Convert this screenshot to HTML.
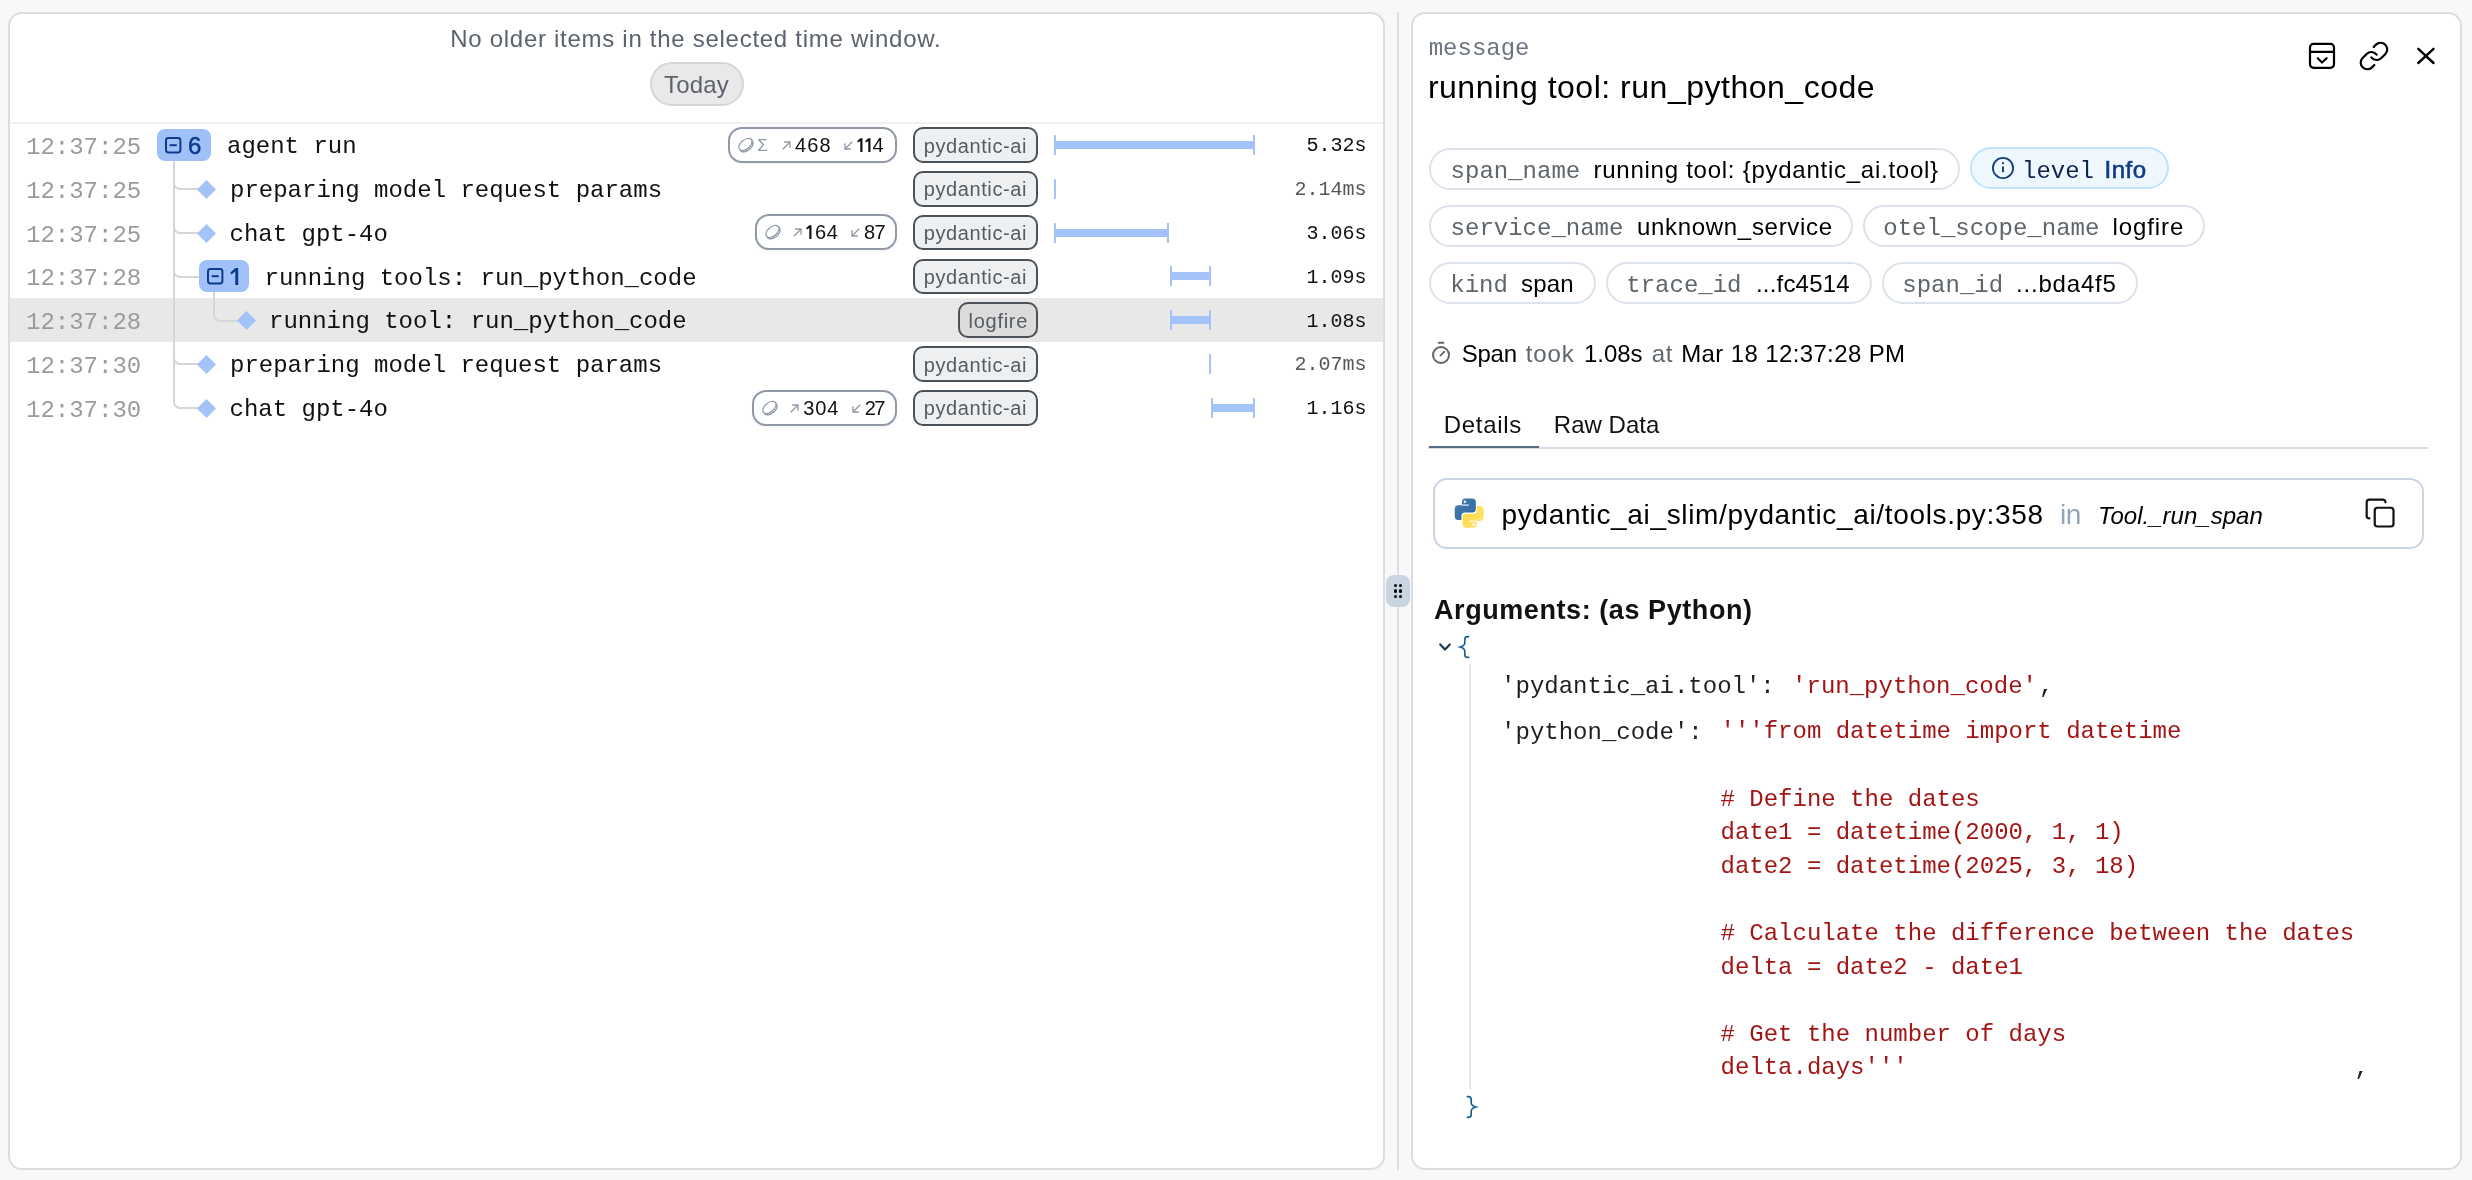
<!DOCTYPE html>
<html><head><meta charset="utf-8"><style>
html,body{margin:0;padding:0;width:2472px;height:1180px;overflow:hidden;background:#f8f8f8;}
.r{position:absolute;}
.t{position:absolute;white-space:pre;}
#w{position:absolute;left:0;top:0;width:2472px;height:1180px;will-change:transform;}
</style></head><body><div id="w">
<div class="r" style="left:8px;top:12px;width:1377px;height:1158px;background:#fff;border:2px solid #dcdde2;border-radius:14px;box-sizing:border-box;"></div>
<div class="r" style="left:1411px;top:12px;width:1051px;height:1158px;background:#fff;border:2px solid #dcdde2;border-radius:14px;box-sizing:border-box;"></div>
<div class="r" style="left:1397px;top:12px;width:2px;height:1158px;background:#dcdde2;"></div>
<div class="r" style="left:1386px;top:575px;width:24px;height:32px;background:#cad5e2;border-radius:8px;"></div>
<div class="r" style="left:1393.9px;top:583.9px;width:3.2px;height:3.2px;border-radius:50%;background:#000"></div>
<div class="r" style="left:1393.9px;top:589.4px;width:3.2px;height:3.2px;border-radius:50%;background:#000"></div>
<div class="r" style="left:1393.9px;top:594.9px;width:3.2px;height:3.2px;border-radius:50%;background:#000"></div>
<div class="r" style="left:1398.9px;top:583.9px;width:3.2px;height:3.2px;border-radius:50%;background:#000"></div>
<div class="r" style="left:1398.9px;top:589.4px;width:3.2px;height:3.2px;border-radius:50%;background:#000"></div>
<div class="r" style="left:1398.9px;top:594.9px;width:3.2px;height:3.2px;border-radius:50%;background:#000"></div>
<div class="t" style="left:450.20px;top:26.70px;font-family:'Liberation Sans', sans-serif;font-weight:400;font-style:normal;font-size:24px;line-height:24px;color:#5c636d;letter-spacing:0.719px;">No older items in the selected time window.</div>
<div class="r" style="left:650px;top:62px;width:94px;height:44px;background:#e9e9ea;border:2px solid #d5d6db;border-radius:22px;box-sizing:border-box;"></div>
<div class="t" style="left:664.00px;top:73.30px;font-family:'Liberation Sans', sans-serif;font-weight:400;font-style:normal;font-size:24px;line-height:24px;color:#5c636d;letter-spacing:0.175px;">Today</div>
<div class="r" style="left:10px;top:122px;width:1373px;height:2px;background:#eff0f1;"></div>
<div class="r" style="left:10px;top:298px;width:1373px;height:44px;background:#e8e8e8;"></div>
<div class="t" style="left:26.00px;top:136.00px;font-family:'Liberation Mono', monospace;font-weight:400;font-style:normal;font-size:24px;line-height:24px;color:#9b9b9b;">12:37:25</div>
<div class="t" style="left:26.00px;top:179.80px;font-family:'Liberation Mono', monospace;font-weight:400;font-style:normal;font-size:24px;line-height:24px;color:#9b9b9b;">12:37:25</div>
<div class="t" style="left:26.00px;top:223.60px;font-family:'Liberation Mono', monospace;font-weight:400;font-style:normal;font-size:24px;line-height:24px;color:#9b9b9b;">12:37:25</div>
<div class="t" style="left:26.00px;top:267.40px;font-family:'Liberation Mono', monospace;font-weight:400;font-style:normal;font-size:24px;line-height:24px;color:#9b9b9b;">12:37:28</div>
<div class="t" style="left:26.00px;top:311.20px;font-family:'Liberation Mono', monospace;font-weight:400;font-style:normal;font-size:24px;line-height:24px;color:#9b9b9b;">12:37:28</div>
<div class="t" style="left:26.00px;top:355.00px;font-family:'Liberation Mono', monospace;font-weight:400;font-style:normal;font-size:24px;line-height:24px;color:#9b9b9b;">12:37:30</div>
<div class="t" style="left:26.00px;top:398.80px;font-family:'Liberation Mono', monospace;font-weight:400;font-style:normal;font-size:24px;line-height:24px;color:#9b9b9b;">12:37:30</div>
<div class="r" style="left:173px;top:161px;width:27px;height:29px;border-left:2px solid #d5d6db;border-bottom:2px solid #d5d6db;border-bottom-left-radius:7px;box-sizing:border-box;"></div>
<div class="r" style="left:173px;top:161px;width:27px;height:73px;border-left:2px solid #d5d6db;border-bottom:2px solid #d5d6db;border-bottom-left-radius:7px;box-sizing:border-box;"></div>
<div class="r" style="left:173px;top:161px;width:27px;height:117px;border-left:2px solid #d5d6db;border-bottom:2px solid #d5d6db;border-bottom-left-radius:7px;box-sizing:border-box;"></div>
<div class="r" style="left:173px;top:161px;width:27px;height:204px;border-left:2px solid #d5d6db;border-bottom:2px solid #d5d6db;border-bottom-left-radius:7px;box-sizing:border-box;"></div>
<div class="r" style="left:173px;top:161px;width:27px;height:248px;border-left:2px solid #d5d6db;border-bottom:2px solid #d5d6db;border-bottom-left-radius:7px;box-sizing:border-box;"></div>
<div class="r" style="left:213px;top:292px;width:27px;height:30px;border-left:2px solid #d5d6db;border-bottom:2px solid #d5d6db;border-bottom-left-radius:7px;box-sizing:border-box;"></div>
<div class="r" style="left:157px;top:129px;width:54px;height:32px;background:#a0c1f8;border-radius:8px;"></div>
<svg class="r" style="left:164.6px;top:136.8px;" width="17" height="17" viewBox="0 0 17 17"><rect x="1" y="1" width="14.4" height="14.4" rx="2.4" fill="none" stroke="#0c3b8c" stroke-width="2"/><line x1="4.6" y1="8.2" x2="11.8" y2="8.2" stroke="#0c3b8c" stroke-width="2"/></svg>
<div class="t" style="left:188.00px;top:134.00px;font-family:'Liberation Sans', sans-serif;font-weight:400;font-style:normal;font-size:24px;line-height:24px;color:#0c3b8c;-webkit-text-stroke:0.5px #0c3b8c;">6</div>
<div class="r" style="left:199px;top:260px;width:50px;height:32px;background:#a0c1f8;border-radius:8px;"></div>
<svg class="r" style="left:206.6px;top:267.8px;" width="17" height="17" viewBox="0 0 17 17"><rect x="1" y="1" width="14.4" height="14.4" rx="2.4" fill="none" stroke="#0c3b8c" stroke-width="2"/><line x1="4.6" y1="8.2" x2="11.8" y2="8.2" stroke="#0c3b8c" stroke-width="2"/></svg>
<svg class="r" style="left:227px;top:266px;" width="14" height="22" viewBox="0 0 14 22"><path d="M8.3 1.9 H11.2 V18.9 H8.3 V5.5 L4.3 8.4 L3.4 6.5 Z" fill="#0c3b8c"/></svg>
<svg class="r" style="left:196.5px;top:179.8px;" width="19" height="19" viewBox="0 0 19 19"><polygon points="9.5,0 19,9.5 9.5,19 0,9.5" fill="#a3c2f7"/></svg>
<svg class="r" style="left:196.5px;top:223.6px;" width="19" height="19" viewBox="0 0 19 19"><polygon points="9.5,0 19,9.5 9.5,19 0,9.5" fill="#a3c2f7"/></svg>
<svg class="r" style="left:236.5px;top:311.2px;" width="19" height="19" viewBox="0 0 19 19"><polygon points="9.5,0 19,9.5 9.5,19 0,9.5" fill="#a3c2f7"/></svg>
<svg class="r" style="left:196.5px;top:355.0px;" width="19" height="19" viewBox="0 0 19 19"><polygon points="9.5,0 19,9.5 9.5,19 0,9.5" fill="#a3c2f7"/></svg>
<svg class="r" style="left:196.5px;top:398.79999999999995px;" width="19" height="19" viewBox="0 0 19 19"><polygon points="9.5,0 19,9.5 9.5,19 0,9.5" fill="#a3c2f7"/></svg>
<div class="t" style="left:227.00px;top:135.20px;font-family:'Liberation Mono', monospace;font-weight:400;font-style:normal;font-size:24px;line-height:24px;color:#111;">agent run</div>
<div class="t" style="left:230.00px;top:179.00px;font-family:'Liberation Mono', monospace;font-weight:400;font-style:normal;font-size:24px;line-height:24px;color:#111;">preparing model request params</div>
<div class="t" style="left:229.50px;top:222.80px;font-family:'Liberation Mono', monospace;font-weight:400;font-style:normal;font-size:24px;line-height:24px;color:#111;">chat gpt-4o</div>
<div class="t" style="left:264.50px;top:266.60px;font-family:'Liberation Mono', monospace;font-weight:400;font-style:normal;font-size:24px;line-height:24px;color:#111;">running tools: run_python_code</div>
<div class="t" style="left:269.00px;top:310.40px;font-family:'Liberation Mono', monospace;font-weight:400;font-style:normal;font-size:24px;line-height:24px;color:#111;">running tool: run_python_code</div>
<div class="t" style="left:230.00px;top:354.20px;font-family:'Liberation Mono', monospace;font-weight:400;font-style:normal;font-size:24px;line-height:24px;color:#111;">preparing model request params</div>
<div class="t" style="left:229.50px;top:398.00px;font-family:'Liberation Mono', monospace;font-weight:400;font-style:normal;font-size:24px;line-height:24px;color:#111;">chat gpt-4o</div>
<div class="r" style="left:728px;top:127px;width:169px;height:36px;background:#fff;border:2px solid #8f99a8;border-radius:14px;box-sizing:border-box;box-shadow:0 1px 2px rgba(0,0,0,0.05);"></div>
<svg class="r" style="left:736.5px;top:135.5px;" width="18" height="18" viewBox="0 0 18 18"><g fill="none" stroke="#8e98a8" stroke-width="1.1" transform="translate(0.6 0.8) scale(1.06) rotate(-40 8 8)"><ellipse cx="8" cy="7" rx="7.3" ry="4.3"/><path d="M0.7 7 V8.8 A7.3 4.3 0 0 0 15.3 8.8 V7"/><line x1="2.50" y1="9.83" x2="2.50" y2="11.63"/><line x1="5.20" y1="10.97" x2="5.20" y2="12.77"/><line x1="8.00" y1="11.30" x2="8.00" y2="13.10"/><line x1="10.80" y1="10.97" x2="10.80" y2="12.77"/><line x1="13.50" y1="9.83" x2="13.50" y2="11.63"/></g></svg>
<div class="t" style="left:757.30px;top:136.80px;font-family:'Liberation Sans', sans-serif;font-weight:400;font-style:normal;font-size:17px;line-height:17px;color:#8e98a8;">Σ</div>
<svg class="r" style="left:782px;top:141.2px;" width="9" height="9" viewBox="0 0 9 9"><g fill="none" stroke="#8e98a8" stroke-width="1.3"><path d="M0.8 8.2 L7.8 1.2"/><path d="M2.2 1 H8 V6.8"/></g></svg>
<div class="t" style="left:795.00px;top:135.00px;font-family:'Liberation Sans', sans-serif;font-weight:400;font-style:normal;font-size:20px;line-height:20px;color:#111;letter-spacing:1.150px;">468</div>
<svg class="r" style="left:844.2px;top:141.4px;" width="9" height="9" viewBox="0 0 9 9"><g fill="none" stroke="#8e98a8" stroke-width="1.3"><path d="M8.2 0.8 L1.2 7.8"/><path d="M1 2.2 V8 H6.8"/></g></svg>
<svg class="r" style="left:856.5px;top:138.1px;" width="6" height="14.2" viewBox="0 0 6 14.2"><path d="M3.3 0.2 H5.5 V13.9 H3.3 V3.0 L1.0 4.5 L0.2 2.9 Z" fill="#111"/></svg>
<svg class="r" style="left:865.4000000000001px;top:138.1px;" width="6" height="14.2" viewBox="0 0 6 14.2"><path d="M3.3 0.2 H5.5 V13.9 H3.3 V3.0 L1.0 4.5 L0.2 2.9 Z" fill="#111"/></svg>
<div class="t" style="left:872.60px;top:135.00px;font-family:'Liberation Sans', sans-serif;font-weight:400;font-style:normal;font-size:20px;line-height:20px;color:#111;">4</div>
<div class="r" style="left:755px;top:214px;width:142px;height:36px;background:#fff;border:2px solid #8f99a8;border-radius:14px;box-sizing:border-box;box-shadow:0 1px 2px rgba(0,0,0,0.05);"></div>
<svg class="r" style="left:763.7px;top:222.5px;" width="18" height="18" viewBox="0 0 18 18"><g fill="none" stroke="#8e98a8" stroke-width="1.1" transform="translate(0.6 0.8) scale(1.06) rotate(-40 8 8)"><ellipse cx="8" cy="7" rx="7.3" ry="4.3"/><path d="M0.7 7 V8.8 A7.3 4.3 0 0 0 15.3 8.8 V7"/><line x1="2.50" y1="9.83" x2="2.50" y2="11.63"/><line x1="5.20" y1="10.97" x2="5.20" y2="12.77"/><line x1="8.00" y1="11.30" x2="8.00" y2="13.10"/><line x1="10.80" y1="10.97" x2="10.80" y2="12.77"/><line x1="13.50" y1="9.83" x2="13.50" y2="11.63"/></g></svg>
<svg class="r" style="left:792.8px;top:228.2px;" width="9" height="9" viewBox="0 0 9 9"><g fill="none" stroke="#8e98a8" stroke-width="1.3"><path d="M0.8 8.2 L7.8 1.2"/><path d="M2.2 1 H8 V6.8"/></g></svg>
<svg class="r" style="left:805.5px;top:225.1px;" width="6" height="14.2" viewBox="0 0 6 14.2"><path d="M3.3 0.2 H5.5 V13.9 H3.3 V3.0 L1.0 4.5 L0.2 2.9 Z" fill="#111"/></svg>
<div class="t" style="left:815.00px;top:222.00px;font-family:'Liberation Sans', sans-serif;font-weight:400;font-style:normal;font-size:20px;line-height:20px;color:#111;letter-spacing:0.700px;">64</div>
<svg class="r" style="left:851.2px;top:228.4px;" width="9" height="9" viewBox="0 0 9 9"><g fill="none" stroke="#8e98a8" stroke-width="1.3"><path d="M8.2 0.8 L1.2 7.8"/><path d="M1 2.2 V8 H6.8"/></g></svg>
<div class="t" style="left:864.00px;top:222.00px;font-family:'Liberation Sans', sans-serif;font-weight:400;font-style:normal;font-size:20px;line-height:20px;color:#111;letter-spacing:-0.700px;">87</div>
<div class="r" style="left:752px;top:390px;width:145px;height:36px;background:#fff;border:2px solid #8f99a8;border-radius:14px;box-sizing:border-box;box-shadow:0 1px 2px rgba(0,0,0,0.05);"></div>
<svg class="r" style="left:760.7px;top:398.5px;" width="18" height="18" viewBox="0 0 18 18"><g fill="none" stroke="#8e98a8" stroke-width="1.1" transform="translate(0.6 0.8) scale(1.06) rotate(-40 8 8)"><ellipse cx="8" cy="7" rx="7.3" ry="4.3"/><path d="M0.7 7 V8.8 A7.3 4.3 0 0 0 15.3 8.8 V7"/><line x1="2.50" y1="9.83" x2="2.50" y2="11.63"/><line x1="5.20" y1="10.97" x2="5.20" y2="12.77"/><line x1="8.00" y1="11.30" x2="8.00" y2="13.10"/><line x1="10.80" y1="10.97" x2="10.80" y2="12.77"/><line x1="13.50" y1="9.83" x2="13.50" y2="11.63"/></g></svg>
<svg class="r" style="left:789.8px;top:404.2px;" width="9" height="9" viewBox="0 0 9 9"><g fill="none" stroke="#8e98a8" stroke-width="1.3"><path d="M0.8 8.2 L7.8 1.2"/><path d="M2.2 1 H8 V6.8"/></g></svg>
<div class="t" style="left:803.30px;top:398.00px;font-family:'Liberation Sans', sans-serif;font-weight:400;font-style:normal;font-size:20px;line-height:20px;color:#111;letter-spacing:0.900px;">304</div>
<svg class="r" style="left:852.4px;top:404.4px;" width="9" height="9" viewBox="0 0 9 9"><g fill="none" stroke="#8e98a8" stroke-width="1.3"><path d="M8.2 0.8 L1.2 7.8"/><path d="M1 2.2 V8 H6.8"/></g></svg>
<div class="t" style="left:864.70px;top:398.00px;font-family:'Liberation Sans', sans-serif;font-weight:400;font-style:normal;font-size:20px;line-height:20px;color:#111;letter-spacing:-1.600px;">27</div>
<div class="r" style="left:913px;top:127.2px;width:125px;height:35.60000000000001px;background:#eeeff1;border:2px solid #4b5158;border-radius:10px;box-sizing:border-box;"></div>
<div class="t" style="left:923.70px;top:135.50px;font-family:'Liberation Sans', sans-serif;font-weight:400;font-style:normal;font-size:20px;line-height:20px;color:#555b63;letter-spacing:0.600px;">pydantic-ai</div>
<div class="r" style="left:913px;top:171.0px;width:125px;height:35.60000000000002px;background:#eeeff1;border:2px solid #4b5158;border-radius:10px;box-sizing:border-box;"></div>
<div class="t" style="left:923.70px;top:179.30px;font-family:'Liberation Sans', sans-serif;font-weight:400;font-style:normal;font-size:20px;line-height:20px;color:#555b63;letter-spacing:0.600px;">pydantic-ai</div>
<div class="r" style="left:913px;top:214.79999999999998px;width:125px;height:35.60000000000002px;background:#eeeff1;border:2px solid #4b5158;border-radius:10px;box-sizing:border-box;"></div>
<div class="t" style="left:923.70px;top:223.10px;font-family:'Liberation Sans', sans-serif;font-weight:400;font-style:normal;font-size:20px;line-height:20px;color:#555b63;letter-spacing:0.600px;">pydantic-ai</div>
<div class="r" style="left:913px;top:258.59999999999997px;width:125px;height:35.60000000000002px;background:#eeeff1;border:2px solid #4b5158;border-radius:10px;box-sizing:border-box;"></div>
<div class="t" style="left:923.70px;top:266.90px;font-family:'Liberation Sans', sans-serif;font-weight:400;font-style:normal;font-size:20px;line-height:20px;color:#555b63;letter-spacing:0.600px;">pydantic-ai</div>
<div class="r" style="left:958px;top:302.4px;width:80px;height:35.60000000000002px;background:#dcdcdd;border:2px solid #4b5158;border-radius:10px;box-sizing:border-box;"></div>
<div class="t" style="left:968.60px;top:310.70px;font-family:'Liberation Sans', sans-serif;font-weight:400;font-style:normal;font-size:20px;line-height:20px;color:#555b63;letter-spacing:0.700px;">logfire</div>
<div class="r" style="left:913px;top:346.2px;width:125px;height:35.60000000000002px;background:#eeeff1;border:2px solid #4b5158;border-radius:10px;box-sizing:border-box;"></div>
<div class="t" style="left:923.70px;top:354.50px;font-family:'Liberation Sans', sans-serif;font-weight:400;font-style:normal;font-size:20px;line-height:20px;color:#555b63;letter-spacing:0.600px;">pydantic-ai</div>
<div class="r" style="left:913px;top:389.99999999999994px;width:125px;height:35.60000000000002px;background:#eeeff1;border:2px solid #4b5158;border-radius:10px;box-sizing:border-box;"></div>
<div class="t" style="left:923.70px;top:398.30px;font-family:'Liberation Sans', sans-serif;font-weight:400;font-style:normal;font-size:20px;line-height:20px;color:#555b63;letter-spacing:0.600px;">pydantic-ai</div>
<div class="r" style="left:1054px;top:135.0px;width:2px;height:20.0px;background:#a3c2f7;"></div>
<div class="r" style="left:1054px;top:141.0px;width:201px;height:8.0px;background:#a3c2f7;"></div>
<div class="r" style="left:1253px;top:135.0px;width:2px;height:20.0px;background:#a3c2f7;"></div>
<div class="r" style="left:1054px;top:178.8px;width:2px;height:20.0px;background:#a3c2f7;"></div>
<div class="r" style="left:1054px;top:222.6px;width:2px;height:20.0px;background:#a3c2f7;"></div>
<div class="r" style="left:1054px;top:228.6px;width:115px;height:8.0px;background:#a3c2f7;"></div>
<div class="r" style="left:1167px;top:222.6px;width:2px;height:20.0px;background:#a3c2f7;"></div>
<div class="r" style="left:1170px;top:266.4px;width:2px;height:20.0px;background:#a3c2f7;"></div>
<div class="r" style="left:1170px;top:272.4px;width:41px;height:8.0px;background:#a3c2f7;"></div>
<div class="r" style="left:1209px;top:266.4px;width:2px;height:20.0px;background:#a3c2f7;"></div>
<div class="r" style="left:1170px;top:310.2px;width:2px;height:20.0px;background:#a3c2f7;"></div>
<div class="r" style="left:1170px;top:316.2px;width:41px;height:8.0px;background:#a3c2f7;"></div>
<div class="r" style="left:1209px;top:310.2px;width:2px;height:20.0px;background:#a3c2f7;"></div>
<div class="r" style="left:1209px;top:354.0px;width:2px;height:20.0px;background:#a3c2f7;"></div>
<div class="r" style="left:1211px;top:397.79999999999995px;width:2px;height:20.0px;background:#a3c2f7;"></div>
<div class="r" style="left:1211px;top:403.79999999999995px;width:44px;height:8.0px;background:#a3c2f7;"></div>
<div class="r" style="left:1253px;top:397.79999999999995px;width:2px;height:20.0px;background:#a3c2f7;"></div>
<div class="t" style="left:1306.60px;top:136.40px;font-family:'Liberation Mono', monospace;font-weight:400;font-style:normal;font-size:20px;line-height:20px;color:#111;">5.32s</div>
<div class="t" style="left:1294.60px;top:180.20px;font-family:'Liberation Mono', monospace;font-weight:400;font-style:normal;font-size:20px;line-height:20px;color:#555;">2.14ms</div>
<div class="t" style="left:1306.60px;top:224.00px;font-family:'Liberation Mono', monospace;font-weight:400;font-style:normal;font-size:20px;line-height:20px;color:#111;">3.06s</div>
<div class="t" style="left:1306.60px;top:267.80px;font-family:'Liberation Mono', monospace;font-weight:400;font-style:normal;font-size:20px;line-height:20px;color:#111;">1.09s</div>
<div class="t" style="left:1306.60px;top:311.60px;font-family:'Liberation Mono', monospace;font-weight:400;font-style:normal;font-size:20px;line-height:20px;color:#111;">1.08s</div>
<div class="t" style="left:1294.60px;top:355.40px;font-family:'Liberation Mono', monospace;font-weight:400;font-style:normal;font-size:20px;line-height:20px;color:#555;">2.07ms</div>
<div class="t" style="left:1306.60px;top:399.20px;font-family:'Liberation Mono', monospace;font-weight:400;font-style:normal;font-size:20px;line-height:20px;color:#111;">1.16s</div>
<div class="t" style="left:1428.70px;top:36.80px;font-family:'Liberation Mono', monospace;font-weight:400;font-style:normal;font-size:24px;line-height:24px;color:#6b7280;">message</div>
<div class="t" style="left:1427.90px;top:70.60px;font-family:'Liberation Sans', sans-serif;font-weight:400;font-style:normal;font-size:32px;line-height:32px;color:#000;letter-spacing:0.514px;">running tool: run_python_code</div>
<svg class="r" style="left:2306px;top:40px;" width="32" height="32" viewBox="0 0 32 32"><g fill="none" stroke="#000" stroke-width="2.2" stroke-linecap="round" stroke-linejoin="round"><rect x="4" y="3.9" width="24" height="23.9" rx="3.5"/><line x1="4" y1="11.9" x2="28" y2="11.9"/><polyline points="11.8,18.2 16,22.5 20.6,18.2"/></g></svg>
<svg class="r" style="left:2357.8px;top:39.9px;" width="32" height="32" viewBox="0 0 24 24"><g fill="none" stroke="#000" stroke-width="1.65" stroke-linecap="round" stroke-linejoin="round"><path d="M10 13a5 5 0 0 0 7.54.54l3-3a5 5 0 0 0-7.07-7.07l-1.72 1.71"/><path d="M14 11a5 5 0 0 0-7.54-.54l-3 3a5 5 0 0 0 7.07 7.07l1.71-1.71"/></g></svg>
<svg class="r" style="left:2410px;top:40px;" width="32" height="32" viewBox="0 0 32 32"><g fill="none" stroke="#000" stroke-width="2.4" stroke-linecap="round"><line x1="8.3" y1="8.8" x2="23.5" y2="23"/><line x1="23.5" y1="8.8" x2="8.3" y2="23"/></g></svg>
<div class="r" style="left:1429px;top:148px;width:531px;height:42px;background:#fff;border:2px solid #dbe2ec;border-radius:22px;box-sizing:border-box;"></div>
<div class="t" style="left:1450.60px;top:159.80px;font-family:'Liberation Mono', monospace;font-weight:400;font-style:normal;font-size:24px;line-height:24px;color:#5f656d;">span_name</div>
<div class="t" style="left:1593.50px;top:157.80px;font-family:'Liberation Sans', sans-serif;font-weight:400;font-style:normal;font-size:24px;line-height:24px;color:#000;letter-spacing:0.742px;">running tool: {pydantic_ai.tool}</div>
<div class="r" style="left:1970px;top:147px;width:199px;height:42px;background:#eff7fe;border:2px solid #bfe3fb;border-radius:22px;box-sizing:border-box;"></div>
<svg class="r" style="left:1990.8px;top:156px;" width="24" height="24" viewBox="0 0 24 24"><circle cx="12" cy="12" r="10.1" fill="none" stroke="#163d7a" stroke-width="1.8"/><line x1="12" y1="10.5" x2="12" y2="16.3" stroke="#163d7a" stroke-width="1.9"/><circle cx="12" cy="7.2" r="1.1" fill="#163d7a"/></svg>
<div class="t" style="left:2022.00px;top:159.50px;font-family:'Liberation Mono', monospace;font-weight:400;font-style:normal;font-size:24px;line-height:24px;color:#0f2350;">level</div>
<div class="t" style="left:2104.60px;top:157.50px;font-family:'Liberation Sans', sans-serif;font-weight:400;font-style:normal;font-size:24px;line-height:24px;color:#0f3a85;letter-spacing:0.467px;-webkit-text-stroke:0.6px #0f3a85;">Info</div>
<div class="r" style="left:1429px;top:205px;width:424px;height:42px;background:#fff;border:2px solid #dbe2ec;border-radius:22px;box-sizing:border-box;"></div>
<div class="t" style="left:1450.60px;top:216.80px;font-family:'Liberation Mono', monospace;font-weight:400;font-style:normal;font-size:24px;line-height:24px;color:#5f656d;">service_name</div>
<div class="t" style="left:1637.00px;top:214.80px;font-family:'Liberation Sans', sans-serif;font-weight:400;font-style:normal;font-size:24px;line-height:24px;color:#000;letter-spacing:0.686px;">unknown_service</div>
<div class="r" style="left:1863px;top:205px;width:342px;height:42px;background:#fff;border:2px solid #dbe2ec;border-radius:22px;box-sizing:border-box;"></div>
<div class="t" style="left:1883.30px;top:216.80px;font-family:'Liberation Mono', monospace;font-weight:400;font-style:normal;font-size:24px;line-height:24px;color:#5f656d;">otel_scope_name</div>
<div class="t" style="left:2112.40px;top:214.80px;font-family:'Liberation Sans', sans-serif;font-weight:400;font-style:normal;font-size:24px;line-height:24px;color:#000;letter-spacing:0.933px;">logfire</div>
<div class="r" style="left:1429px;top:262px;width:167px;height:42px;background:#fff;border:2px solid #dbe2ec;border-radius:22px;box-sizing:border-box;"></div>
<div class="t" style="left:1450.30px;top:273.80px;font-family:'Liberation Mono', monospace;font-weight:400;font-style:normal;font-size:24px;line-height:24px;color:#5f656d;">kind</div>
<div class="t" style="left:1521.00px;top:271.80px;font-family:'Liberation Sans', sans-serif;font-weight:400;font-style:normal;font-size:24px;line-height:24px;color:#000;letter-spacing:0.167px;">span</div>
<div class="r" style="left:1606px;top:262px;width:266px;height:42px;background:#fff;border:2px solid #dbe2ec;border-radius:22px;box-sizing:border-box;"></div>
<div class="t" style="left:1626.30px;top:273.80px;font-family:'Liberation Mono', monospace;font-weight:400;font-style:normal;font-size:24px;line-height:24px;color:#5f656d;">trace_id</div>
<div class="t" style="left:1756.00px;top:271.80px;font-family:'Liberation Sans', sans-serif;font-weight:400;font-style:normal;font-size:24px;line-height:24px;color:#000;letter-spacing:0.188px;">...fc4514</div>
<div class="r" style="left:1882px;top:262px;width:256px;height:42px;background:#fff;border:2px solid #dbe2ec;border-radius:22px;box-sizing:border-box;"></div>
<div class="t" style="left:1902.30px;top:273.80px;font-family:'Liberation Mono', monospace;font-weight:400;font-style:normal;font-size:24px;line-height:24px;color:#5f656d;">span_id</div>
<div class="t" style="left:2016.00px;top:271.80px;font-family:'Liberation Sans', sans-serif;font-weight:400;font-style:normal;font-size:24px;line-height:24px;color:#000;letter-spacing:0.812px;">...bda4f5</div>
<svg class="r" style="left:1430px;top:340px;" width="22" height="26" viewBox="0 0 22 26"><g fill="none" stroke="#5f6670" stroke-width="2" stroke-linecap="round"><circle cx="11" cy="15" r="8"/><line x1="8.8" y1="2.8" x2="13.4" y2="2.8"/><line x1="10.4" y1="15.6" x2="14.3" y2="11.6" stroke-width="1.7"/></g></svg>
<div class="t" style="left:1461.70px;top:342.00px;font-family:'Liberation Sans', sans-serif;font-weight:400;font-style:normal;font-size:24px;line-height:24px;color:#000;letter-spacing:-0.233px;">Span</div>
<div class="t" style="left:1525.80px;top:342.00px;font-family:'Liberation Sans', sans-serif;font-weight:400;font-style:normal;font-size:24px;line-height:24px;color:#5f6670;letter-spacing:0.867px;">took</div>
<div class="t" style="left:1584.00px;top:342.00px;font-family:'Liberation Sans', sans-serif;font-weight:400;font-style:normal;font-size:24px;line-height:24px;color:#000;letter-spacing:-0.050px;">1.08s</div>
<div class="t" style="left:1651.70px;top:342.00px;font-family:'Liberation Sans', sans-serif;font-weight:400;font-style:normal;font-size:24px;line-height:24px;color:#5f6670;letter-spacing:0.700px;">at</div>
<div class="t" style="left:1681.20px;top:342.00px;font-family:'Liberation Sans', sans-serif;font-weight:400;font-style:normal;font-size:24px;line-height:24px;color:#000;letter-spacing:0.376px;">Mar 18 12:37:28 PM</div>
<div class="r" style="left:1428px;top:447px;width:1000px;height:2px;background:#d9dce1;"></div>
<div class="r" style="left:1429px;top:446px;width:110px;height:2px;background:#566b86;"></div>
<div class="t" style="left:1443.80px;top:413.00px;font-family:'Liberation Sans', sans-serif;font-weight:400;font-style:normal;font-size:24px;line-height:24px;color:#111;letter-spacing:0.667px;">Details</div>
<div class="t" style="left:1553.80px;top:413.00px;font-family:'Liberation Sans', sans-serif;font-weight:400;font-style:normal;font-size:24px;line-height:24px;color:#111;letter-spacing:0.029px;">Raw Data</div>
<div class="r" style="left:1433px;top:478px;width:991px;height:71px;background:#fff;border:2px solid #cbd5e1;border-radius:14px;box-sizing:border-box;"></div>
<svg class="r" style="left:1454px;top:498px;" width="31" height="31" viewBox="0 0 31 31"><defs><linearGradient id="pb" x1="0" y1="0" x2="1" y2="1"><stop offset="0" stop-color="#3f7bb3"/><stop offset="1" stop-color="#356a98"/></linearGradient><linearGradient id="py" x1="0" y1="0" x2="1" y2="1"><stop offset="0" stop-color="#ffe873"/><stop offset="1" stop-color="#ffd43b"/></linearGradient></defs><g id="snake"><path d="M11.4 0.5 H18.2 Q21.8 0.5 21.8 4 V11 Q21.8 14.5 18.3 14.5 H11 Q7.4 14.5 7.4 18 V22 H4.2 Q0.7 22 0.7 17.5 V11.7 Q0.7 7.3 4.5 7.3 H14.8 V6.7 H7.9 V4 Q7.9 0.5 11.4 0.5 Z" fill="url(#pb)"/><circle cx="10.9" cy="3.8" r="1.25" fill="#fff"/><rect x="7.9" y="6.7" width="6.9" height="0.8" fill="#fff"/></g><g transform="rotate(180 15.2 15.1)"><path d="M11.4 0.5 H18.2 Q21.8 0.5 21.8 4 V11 Q21.8 14.5 18.3 14.5 H11 Q7.4 14.5 7.4 18 V22 H4.2 Q0.7 22 0.7 17.5 V11.7 Q0.7 7.3 4.5 7.3 H14.8 V6.7 H7.9 V4 Q7.9 0.5 11.4 0.5 Z" fill="url(#py)"/><circle cx="10.9" cy="3.8" r="1.25" fill="#fff"/><rect x="7.9" y="6.7" width="6.9" height="0.8" fill="#fff"/></g></svg>
<div class="t" style="left:1501.60px;top:500.60px;font-family:'Liberation Sans', sans-serif;font-weight:400;font-style:normal;font-size:28px;line-height:28px;color:#000;letter-spacing:0.655px;">pydantic_ai_slim/pydantic_ai/tools.py:358</div>
<div class="t" style="left:2060.00px;top:500.60px;font-family:'Liberation Sans', sans-serif;font-weight:400;font-style:normal;font-size:28px;line-height:28px;color:#94a3b8;letter-spacing:-0.500px;">in</div>
<div class="t" style="left:2098.00px;top:503.60px;font-family:'Liberation Sans', sans-serif;font-weight:400;font-style:italic;font-size:24px;line-height:24px;color:#000;letter-spacing:0.015px;">Tool._run_span</div>
<svg class="r" style="left:2363.6px;top:496.6px;" width="32.2" height="32.2" viewBox="0 0 24 24"><g fill="none" stroke="#111" stroke-width="1.64" stroke-linecap="round" stroke-linejoin="round"><rect width="14" height="14" x="8" y="8" rx="2" ry="2"/><path d="M4 16c-1.1 0-2-.9-2-2V4c0-1.1.9-2 2-2h10c1.1 0 2 .9 2 2"/></g></svg>
<div class="t" style="left:1434.00px;top:596.80px;font-family:'Liberation Sans', sans-serif;font-weight:700;font-style:normal;font-size:27px;line-height:27px;color:#111;letter-spacing:0.571px;font-weight:600;">Arguments: (as Python)</div>
<svg class="r" style="left:1437px;top:640px;" width="16" height="14" viewBox="0 0 16 14"><polyline points="3.2,4.5 8,9.5 12.8,4.5" fill="none" stroke="#1b3a4b" stroke-width="2.2" stroke-linecap="round" stroke-linejoin="round"/></svg>
<svg class="r" style="left:1457px;top:634px;" width="14" height="26" viewBox="0 0 14 26"><path d="M11.6 2.6 C8.4 2.2 7.6 3.6 7.8 6.6 C8 9.6 8.2 11.6 3.2 13 C8.2 14.4 8 16.4 7.8 19.4 C7.6 22.4 8.4 23.8 11.6 23.4" fill="none" stroke="#1a6090" stroke-width="1.7" stroke-linecap="round"/></svg>
<div class="r" style="left:1469px;top:664px;width:2px;height:425px;background:#e6e6e6;"></div>
<svg class="r" style="left:1465px;top:1094px;" width="14" height="26" viewBox="0 0 14 26"><path d="M2.4 2.6 C5.6 2.2 6.4 3.6 6.2 6.6 C6 9.6 5.8 11.6 10.8 13 C5.8 14.4 6 16.4 6.2 19.4 C6.4 22.4 5.6 23.8 2.4 23.4" fill="none" stroke="#1a6090" stroke-width="1.7" stroke-linecap="round"/></svg>
<div class="t" style="left:1501.10px;top:675.40px;font-family:&quot;Liberation Mono&quot;, monospace;font-size:24px;line-height:24px;color:#1c2024;">'pydantic_ai.tool':</div>
<div class="t" style="left:1792.10px;top:675.40px;font-family:&quot;Liberation Mono&quot;, monospace;font-size:24px;line-height:24px;color:#a31515;">'run_python_code'</div>
<div class="t" style="left:2038.90px;top:675.40px;font-family:&quot;Liberation Mono&quot;, monospace;font-size:24px;line-height:24px;color:#1c2024;">,</div>
<div class="t" style="left:1501.10px;top:720.90px;font-family:&quot;Liberation Mono&quot;, monospace;font-size:24px;line-height:24px;color:#1c2024;">'python_code':</div>
<div class="t" style="left:1720.50px;top:720.30px;font-family:&quot;Liberation Mono&quot;, monospace;font-size:24px;line-height:24px;color:#a31515;">'''from datetime import datetime</div>
<div class="t" style="left:1720.50px;top:787.50px;font-family:&quot;Liberation Mono&quot;, monospace;font-size:24px;line-height:24px;color:#a31515;"># Define the dates</div>
<div class="t" style="left:1720.50px;top:821.10px;font-family:&quot;Liberation Mono&quot;, monospace;font-size:24px;line-height:24px;color:#a31515;">date1 = datetime(2000, 1, 1)</div>
<div class="t" style="left:1720.50px;top:854.70px;font-family:&quot;Liberation Mono&quot;, monospace;font-size:24px;line-height:24px;color:#a31515;">date2 = datetime(2025, 3, 18)</div>
<div class="t" style="left:1720.50px;top:921.90px;font-family:&quot;Liberation Mono&quot;, monospace;font-size:24px;line-height:24px;color:#a31515;"># Calculate the difference between the dates</div>
<div class="t" style="left:1720.50px;top:955.50px;font-family:&quot;Liberation Mono&quot;, monospace;font-size:24px;line-height:24px;color:#a31515;">delta = date2 - date1</div>
<div class="t" style="left:1720.50px;top:1022.70px;font-family:&quot;Liberation Mono&quot;, monospace;font-size:24px;line-height:24px;color:#a31515;"># Get the number of days</div>
<div class="t" style="left:1720.50px;top:1056.30px;font-family:&quot;Liberation Mono&quot;, monospace;font-size:24px;line-height:24px;color:#a31515;">delta.days'''</div>
<div class="t" style="left:2354.50px;top:1056.50px;font-family:&quot;Liberation Mono&quot;, monospace;font-size:24px;line-height:24px;color:#1c2024;">,</div>
</div></body></html>
